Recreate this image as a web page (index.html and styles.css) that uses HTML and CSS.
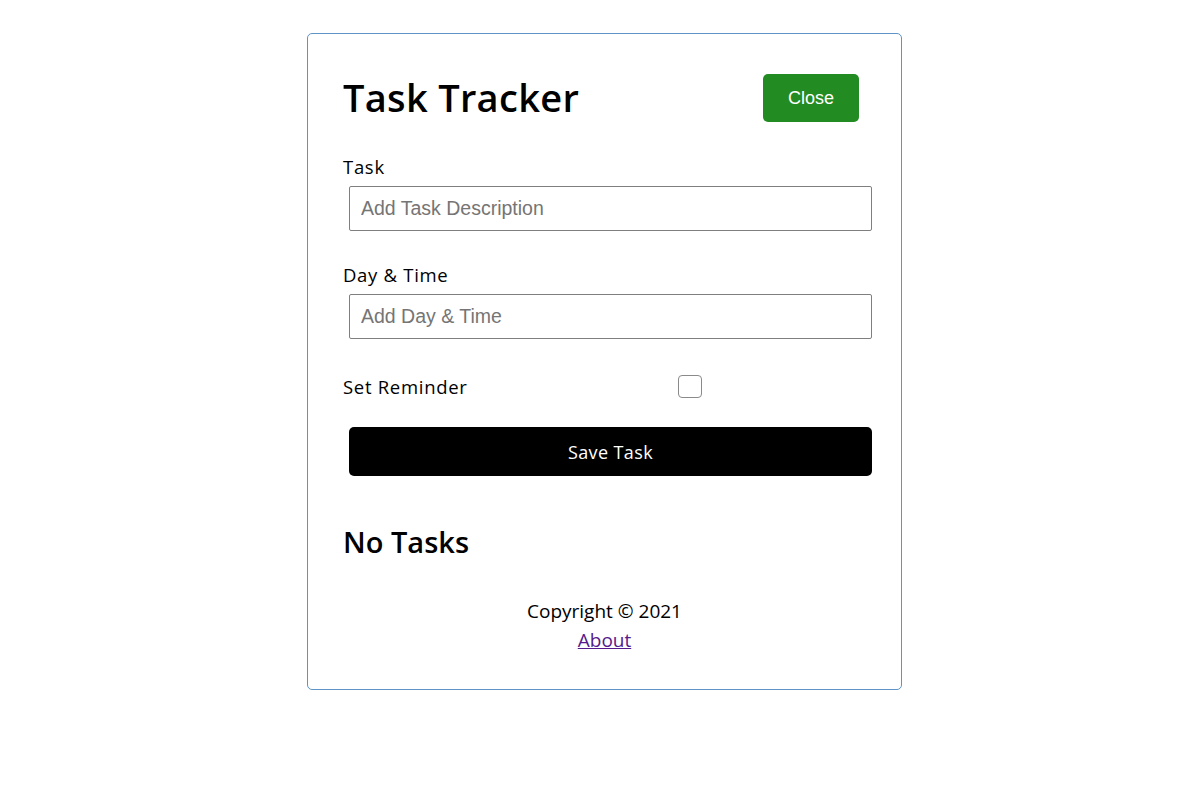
FILE: index.html
```html
<!DOCTYPE html>
<html lang="en">
<head>
<meta charset="utf-8">
<title>Task Tracker</title>
<link rel="stylesheet" href="styles.css">
</head>
<body>
<div class="container">
  <header class="header">
    <h1 class="title">Task Tracker</h1>
    <button class="btn btn-close">Close</button>
  </header>
  <form class="add-form">
    <div class="form-control">
      <label>Task</label>
      <input type="text" placeholder="Add Task Description">
    </div>
    <div class="form-control">
      <label>Day &amp; Time</label>
      <input type="text" placeholder="Add Day &amp; Time">
    </div>
    <div class="form-control form-control-check">
      <label>Set Reminder</label>
      <span class="check-wrap"><input type="checkbox" class="check"></span>
    </div>
    <button type="button" class="btn btn-block">Save Task</button>
  </form>
  <h3 class="empty">No Tasks</h3>
  <footer class="footer">
    <p>Copyright &copy; 2021</p>
    <a href="#" class="about">About</a>
  </footer>
</div>
</body>
</html>
```
FILE: styles.css
```css
* {
  box-sizing: border-box;
  margin: 0;
  padding: 0;
}

body {
  font-family: "Open Sans", "DejaVu Sans", sans-serif;
  padding-left: 9px;
  background: #fff;
  color: #000;
}

.container {
  width: 595px;
  margin: 33px auto 0;
  border: 1px solid #5f94c9;
  border-radius: 5px;
  padding: 33px 35px 35px;
}

.header {
  display: flex;
  justify-content: space-between;
  align-items: center;
  height: 62px;
  margin-bottom: 24px;
}

.title {
  font-size: 38px;
  font-weight: 600;
  line-height: 1.2;
  letter-spacing: 0.3px;
}

.btn {
  display: inline-block;
  border: none;
  border-radius: 5px;
  color: #fff;
  background: #000;
  cursor: pointer;
}

.btn-close {
  width: 96px;
  height: 48px;
  margin-right: 7px;
  background: #228b22;
  font-family: "Liberation Sans", Arial, sans-serif;
  font-size: 18px;
}

.form-control {
  display: flow-root;
  margin: 24px 0;
}

.form-control label {
  display: block;
  font-size: 18.5px;
  line-height: 27px;
  letter-spacing: 0.7px;
}

.form-control input[type="text"] {
  display: block;
  width: 100%;
  height: 45px;
  margin: 6px 0 6px 6px;
  padding: 0 11px;
  border: 1px solid #7f7f7f;
  border-radius: 2px;
  font-family: "Liberation Sans", Arial, sans-serif;
  font-size: 19.5px;
  color: #000;
}

.form-control input[type="text"]::placeholder {
  color: #757575;
}

.form-control-check {
  display: flex;
  align-items: center;
  height: 34px;
}

.form-control-check label {
  flex: 1;
}

.check-wrap {
  flex: 2;
  display: flex;
  justify-content: center;
  margin: 0 6px;
}

.check {
  appearance: none;
  -webkit-appearance: none;
  width: 24px;
  height: 23px;
  border: 1.5px solid #8a8a8a;
  border-radius: 4px;
  background: #fff;
}

.btn-block {
  display: block;
  width: 100%;
  height: 49px;
  margin-left: 6px;
  font-family: inherit;
  font-size: 18px;
  font-weight: 500;
  letter-spacing: 0.4px;
}

.add-form {
  margin-bottom: 44px;
}

.empty {
  font-size: 29px;
  font-weight: 600;
  line-height: 44px;
}

.footer {
  margin-top: 33px;
  text-align: center;
  font-size: 19px;
  line-height: 28.5px;
}

.about {
  color: #551a8b;
}
```
